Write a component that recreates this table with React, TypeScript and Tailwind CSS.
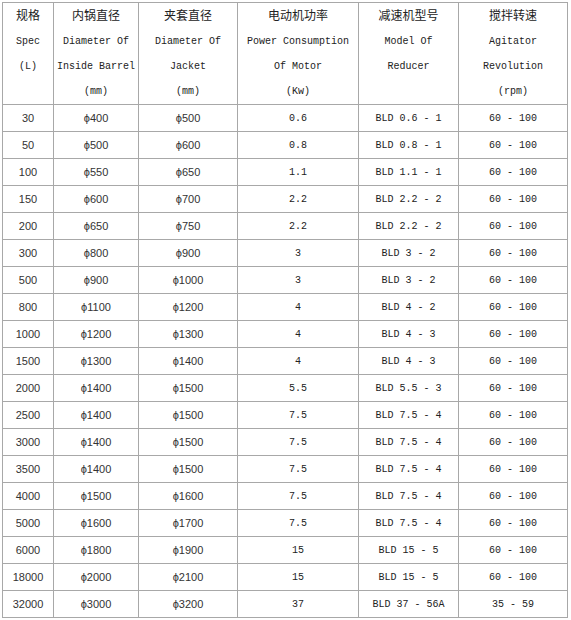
import React from "react";

const rows: string[][] = [
  ["30", "ϕ400", "ϕ500", "0.6", "BLD 0.6 - 1", "60 - 100"],
  ["50", "ϕ500", "ϕ600", "0.8", "BLD 0.8 - 1", "60 - 100"],
  ["100", "ϕ550", "ϕ650", "1.1", "BLD 1.1 - 1", "60 - 100"],
  ["150", "ϕ600", "ϕ700", "2.2", "BLD 2.2 - 2", "60 - 100"],
  ["200", "ϕ650", "ϕ750", "2.2", "BLD 2.2 - 2", "60 - 100"],
  ["300", "ϕ800", "ϕ900", "3", "BLD 3 - 2", "60 - 100"],
  ["500", "ϕ900", "ϕ1000", "3", "BLD 3 - 2", "60 - 100"],
  ["800", "ϕ1100", "ϕ1200", "4", "BLD 4 - 2", "60 - 100"],
  ["1000", "ϕ1200", "ϕ1300", "4", "BLD 4 - 3", "60 - 100"],
  ["1500", "ϕ1300", "ϕ1400", "4", "BLD 4 - 3", "60 - 100"],
  ["2000", "ϕ1400", "ϕ1500", "5.5", "BLD 5.5 - 3", "60 - 100"],
  ["2500", "ϕ1400", "ϕ1500", "7.5", "BLD 7.5 - 4", "60 - 100"],
  ["3000", "ϕ1400", "ϕ1500", "7.5", "BLD 7.5 - 4", "60 - 100"],
  ["3500", "ϕ1400", "ϕ1500", "7.5", "BLD 7.5 - 4", "60 - 100"],
  ["4000", "ϕ1500", "ϕ1600", "7.5", "BLD 7.5 - 4", "60 - 100"],
  ["5000", "ϕ1600", "ϕ1700", "7.5", "BLD 7.5 - 4", "60 - 100"],
  ["6000", "ϕ1800", "ϕ1900", "15", "BLD 15 - 5", "60 - 100"],
  ["18000", "ϕ2000", "ϕ2100", "15", "BLD 15 - 5", "60 - 100"],
  ["32000", "ϕ3000", "ϕ3200", "37", "BLD 37 - 56A", "35 - 59"],
];

const headers: string[][] = [
  ["规格", "Spec", "(L)"],
  ["内锅直径", "Diameter Of", "Inside Barrel", "(mm)"],
  ["夹套直径", "Diameter Of", "Jacket", "(mm)"],
  ["电动机功率", "Power Consumption", "Of Motor", "(Kw)"],
  ["减速机型号", "Model Of", "Reducer"],
  ["搅拌转速", "Agitator", "Revolution", "(rpm)"],
];

const mono = "font-['Liberation_Mono',monospace] text-[10px] text-[#222]";
const sans = "font-['Liberation_Sans',sans-serif] text-[11px] text-[#333]";

export default function App() {
  return (
    <div className="bg-white w-[571px] h-[620px] pt-[2px] pl-[2px]">
      <div className="grid grid-cols-[51px_85px_99px_121px_100px_109px] w-[566px] border-l border-t border-[#a8a8a8]">
        {headers.map((h, i) => (
          <div key={i} className="border-r border-b border-[#a8a8a8] h-[102px] flex flex-col items-center">
            <div className="h-[26px] leading-[24px] text-[12px] font-['Noto_Sans_CJK_SC',sans-serif] text-[#222]">{h[0]}</div>
            {h.slice(1).map((t, j) => (
              <div key={j} className={`leading-[25px] whitespace-pre ${mono}`}>{t}</div>
            ))}
          </div>
        ))}
        {rows.map((r, ri) =>
          r.map((c, ci) => (
            <div
              key={`${ri}-${ci}`}
              className={`border-r border-b border-[#a8a8a8] h-[27px] flex items-center justify-center whitespace-pre ${ci < 3 ? sans : mono}`}
            >
              {c}
            </div>
          ))
        )}
      </div>
    </div>
  );
}
